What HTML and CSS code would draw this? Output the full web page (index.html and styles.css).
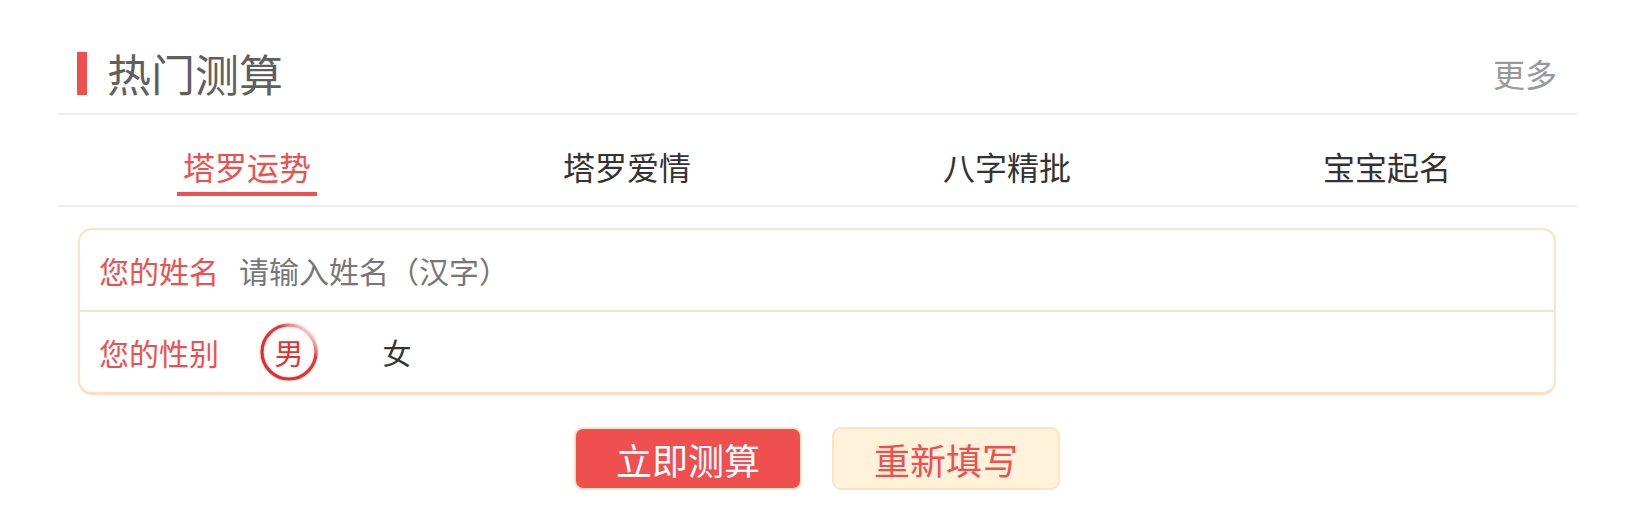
FILE: index.html
```html
<!DOCTYPE html>
<html lang="zh-CN">
<head>
    <meta charset="UTF-8">
    <meta name="viewport" content="width=device-width, initial-scale=1.0">
    <title>热门测算</title>
    <link rel="stylesheet" href="styles.css">
</head>
<body>
    <div class="wrap">
        <div class="head">
            <h2 class="head-title">热门测算</h2>
            <a class="head-more" href="#">更多</a>
        </div>

        <div class="tabs">
            <span class="tab active">塔罗运势</span>
            <span class="tab">塔罗爱情</span>
            <span class="tab">八字精批</span>
            <span class="tab">宝宝起名</span>
        </div>

        <div class="form-box">
            <div class="form-row">
                <label class="form-label" for="name">您的姓名</label>
                <input class="form-input" type="text" id="name" placeholder="请输入姓名（汉字）">
            </div>
            <div class="form-row">
                <span class="form-label">您的性别</span>
                <div class="sex">
                    <span class="sex-item checked">
                        <svg class="ring" width="58" height="58" viewBox="0 0 58 58">
                            <defs>
                                <linearGradient id="ringGrad" x1="0.1" y1="0.9" x2="0.85" y2="0.05">
                                    <stop offset="0" stop-color="#e32a2a"/>
                                    <stop offset="0.72" stop-color="#e83535"/>
                                    <stop offset="0.9" stop-color="#f4a9a9"/>
                                    <stop offset="1" stop-color="#fde6e6"/>
                                </linearGradient>
                            </defs>
                            <circle cx="29" cy="29" r="27" fill="none" stroke="url(#ringGrad)" stroke-width="3.2"/>
                        </svg>
                        男
                    </span>
                    <span class="sex-item">女</span>
                </div>
            </div>
        </div>

        <div class="btns">
            <button class="btn btn-submit">立即测算</button>
            <button class="btn btn-reset">重新填写</button>
        </div>
    </div>
</body>
</html>
```

FILE: styles.css
```css
body {
    margin: 0;
    padding: 0;
    background: #fff;
    font-family: "Noto Sans CJK SC", "Microsoft YaHei", sans-serif;
}

.wrap {
    width: 1520px;
    margin-left: 57px;
    padding-top: 33px;
}

.head {
    display: flex;
    align-items: center;
    justify-content: space-between;
    height: 80px;
    border-bottom: 2px solid #eee;
}

.head-title {
    margin: 0 0 0 20px;
    padding-left: 20px;
    border-left: 10px solid #f04f4f;
    height: 43px;
    line-height: 43px;
    font-size: 44px;
    font-weight: normal;
    color: #5f5f5f;
}

.head-more {
    margin-right: 20px;
    font-size: 32px;
    color: #999;
    text-decoration: none;
}

.tabs {
    display: grid;
    grid-template-columns: repeat(4, 1fr);
    justify-items: center;
    padding: 29px 0 9px;
    border-bottom: 2px solid #eee;
}

.tab {
    width: 140px;
    text-align: center;
    font-size: 32px;
    line-height: 44px;
    color: #333;
    padding-bottom: 4px;
    border-bottom: 4px solid transparent;
}

.tab.active {
    color: #f04f4f;
    border-bottom-color: #f04f4f;
}

.form-box {
    margin: 21px 21px 0;
    border: 2px solid #fee2c6;
    border-bottom: 3px solid #fddfc0;
    border-radius: 14px;
}

.form-row {
    display: flex;
    align-items: center;
    height: 80px;
    padding-left: 19px;
}

.form-row + .form-row {
    border-top: 2px solid #fee2c6;
}

.form-label {
    width: 120px;
    font-size: 30px;
    color: #f04f4f;
}

.form-input {
    flex: 1;
    margin-left: 20px;
    border: none;
    outline: none;
    padding: 0;
    font-family: inherit;
    font-size: 30px;
    color: #333;
    background: transparent;
}

.form-input::placeholder {
    color: #777;
}

.sex {
    display: flex;
    gap: 50px;
    margin-left: 41px;
}

.sex-item {
    position: relative;
    width: 58px;
    height: 58px;
    display: flex;
    align-items: center;
    justify-content: center;
    font-size: 29px;
    color: #333;
}

.sex-item.checked {
    color: #e8302f;
}

.ring {
    position: absolute;
    left: 0;
    top: 0;
    filter: drop-shadow(0 0 1px rgba(230, 60, 60, 0.35));
}

.btns {
    display: flex;
    justify-content: center;
    gap: 30px;
    margin-top: 32px;
}

.btn {
    width: 228px;
    height: 63px;
    border: 2px solid #fde2c6;
    border-radius: 9px;
    font-family: inherit;
    font-size: 36px;
    cursor: pointer;
}

.btn-submit {
    background: #f04f4f;
    color: #fff;
}

.btn-reset {
    background: #fff2da;
    color: #f04f4f;
}
```
